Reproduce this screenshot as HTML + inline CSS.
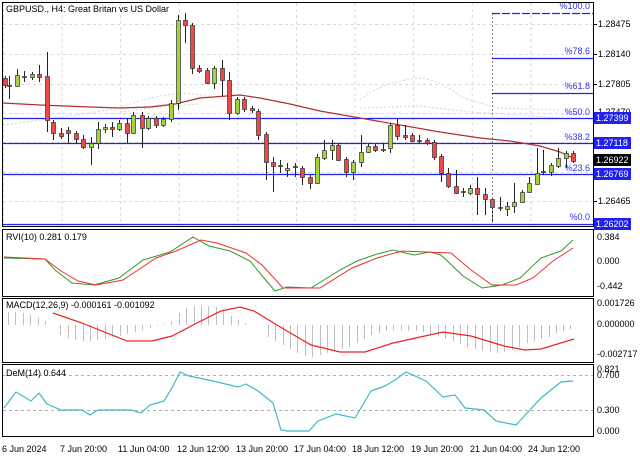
<!DOCTYPE html>
<html><head><meta charset="utf-8"><style>
body{margin:0;background:#fff;width:640px;height:457px;overflow:hidden}
svg{display:block;font-family:"Liberation Sans",sans-serif;font-size:9px}
</style></head><body>
<svg id="s" width="640" height="457" xmlns="http://www.w3.org/2000/svg">
<rect width="640" height="457" fill="#fff"/>
<g id="grid" stroke="#d8d8d8" stroke-dasharray="3,3" stroke-width="1"></g>
<!-- ichimoku faint -->
<g fill="none" stroke="#d4d4d4" stroke-dasharray="2,2">
<path d="M3,125 Q60,118 120,108 Q150,96 175,94 Q200,92 215,100"/>
<path d="M120,112 Q160,106 200,104"/>
<path d="M360,100 Q380,82 420,78 Q440,80 460,96 Q480,104 500,108 L560,110"/>
<path d="M360,108 L420,106 L470,112 L560,118"/>
</g>
<g id="hl"></g>
<polyline id="ma" fill="none" stroke="#b03030" stroke-width="1.2" points="3,103 40,105 90,107 120,108 150,107 175,104 200,98 240,95 260,98 290,104 320,111 360,118 400,125 440,132 480,138 510,141 540,146 560,152 573,158"/>
<g id="candles"></g>
<g id="fib"></g>
<!-- panel borders -->
<g fill="none" stroke="#000" stroke-width="1">
<rect x="2.5" y="2.5" width="591" height="224"/>
<rect x="2.5" y="229.5" width="591" height="67"/>
<rect x="2.5" y="298.5" width="591" height="64"/>
<rect x="2.5" y="364.5" width="591" height="72"/>
</g>
<text x="6" y="12" fill="#000">GBPUSD., H4:  Great Britan vs US Dollar</text>
<g id="axis" fill="#000"></g>
<!-- RVI -->
<polyline fill="none" stroke="#2e9a2e" points="4,258 45,259 55,270 72,283 94,285 119,278 143,260 170,252 193,237 209,246 230,251 250,261 264,278 275,291 287,287 311,288 340,270 357,261 377,254 393,250 414,255 430,252 441,255 463,276 482,288 502,285 520,278 541,258 561,251 573,240"/>
<polyline fill="none" stroke="#f03030" points="4,257 45,259 61,271 78,281 96,285 123,280 156,258 176,251 201,240 217,243 246,253 262,265 283,288 320,288 352,268 377,258 402,251 451,253 471,270 492,285 516,285 533,278 553,261 573,248"/>
<text x="6" y="240">RVI(10) 0.281 0.179</text>
<g id="macd" stroke="#c0c0c0" stroke-width="1"></g>
<polyline fill="none" stroke="#f02020" stroke-width="1.2" points="53,313 82,323 127,341 152,341 172,336 197,323 221,311 240,307 254,311 287,331 311,345 340,352 365,352 393,343 443,332 471,336 504,346 525,350 541,349 574,339"/>
<text x="6" y="308">MACD(12,26,9) -0.000161 -0.001092</text>
<g stroke="#b0b0b0" stroke-dasharray="3,3"><line x1="3" y1="375.5" x2="593" y2="375.5"/><line x1="3" y1="410.5" x2="593" y2="410.5"/></g>
<polyline fill="none" stroke="#40b8c8" stroke-width="1.2" points="4,408 16,392 31,401 39,393 47,404 61,410 82,410 90,415 98,410 131,410 141,413 150,405 164,401 172,388 180,372 189,376 213,381 238,387 246,384 258,391 273,403 281,430 287,431 309,431 318,421 336,414 355,418 371,391 385,386 395,380 406,372 426,381 443,397 455,395 465,408 484,410 496,421 516,425 529,411 541,398 561,382 573,381"/>
<text x="6" y="376">DeM(14) 0.644</text>
<g fill="#000">
<text x="597" y="240">0.384</text><text x="597" y="264">0.000</text><text x="597" y="289">-0.442</text>
<text x="597" y="306">0.001726</text><text x="597" y="327">0.000000</text><text x="597" y="357">-0.002717</text>
<text x="597" y="372">0.821</text><text x="597" y="378">0.700</text><text x="597" y="413">0.300</text><text x="597" y="434">0.000</text>
<text x="2" y="452">6 Jun 2024</text><text x="60" y="452">7 Jun 20:00</text><text x="118" y="452">11 Jun 04:00</text>
<text x="177" y="452">12 Jun 12:00</text><text x="236" y="452">13 Jun 20:00</text><text x="294" y="452">17 Jun 04:00</text>
<text x="352" y="452">18 Jun 12:00</text><text x="411" y="452">19 Jun 20:00</text><text x="470" y="452">21 Jun 04:00</text>
<text x="528" y="452">24 Jun 12:00</text>
</g>
</svg>
<script>
var NS="http://www.w3.org/2000/svg";
function el(p,t,a,txt){var e=document.createElementNS(NS,t);for(var k in a)e.setAttribute(k,a[k]);if(txt)e.textContent=txt;document.getElementById(p).appendChild(e);return e;}
for(var i=0;i<10;i++){var x=3.5+58.6*i;el("grid","line",{x1:x,y1:3,x2:x,y2:226});}
[24,54,84,113,142,172,201].forEach(function(y){el("grid","line",{x1:3,y1:y+.5,x2:593,y2:y+.5});});
[118,143,174,224].forEach(function(y){el("hl","line",{x1:3,y1:y+.5,x2:593,y2:y+.5,stroke:"#2020f0","stroke-width":1.3});});
// candles: x, top, bottom, high, low, up(1)/down(0)
var C=[[5,78,85,76,88,0],[9,85,86,76,99,0],[17,75,86,69,86,1],[24,76,77,71,82,0],[32,74,77,72,80,1],[39,74,77,65,82,0],[47,76,120,52,132,0],[53,122,133,120,140,0],[61,133,136,128,139,0],[68,130,133,127,144,0],[76,133,139,131,143,0],[83,139,147,135,149,0],[91,143,147,137,165,1],[98,129,143,122,149,1],[105,127,129,124,133,1],[112,127,129,122,137,0],[119,123,129,120,131,1],[127,123,133,118,143,0],[133,115,133,112,134,1],[142,115,128,112,148,0],[148,118,128,116,130,1],[156,118,125,116,128,0],[163,119,125,117,127,1],[171,103,119,100,122,1],[178,20,103,15,110,1],[185,20,25,13,43,0],[192,25,68,23,74,0],[199,68,71,65,73,0],[207,70,83,68,84,0],[214,68,83,66,89,1],[222,68,80,60,96,0],[229,80,113,72,120,0],[237,99,113,97,115,1],[244,99,109,97,112,0],[252,108,110,106,113,0],[258,111,135,109,140,0],[266,134,162,132,180,0],[273,162,166,157,192,0],[280,165,166,160,173,0],[287,168,170,163,177,1],[295,166,167,163,177,0],[302,168,177,166,185,0],[310,177,183,175,189,0],[317,157,183,154,184,1],[324,150,158,140,160,1],[332,145,150,140,160,1],[338,145,160,143,161,0],[346,159,172,157,177,0],[353,162,172,160,180,1],[361,152,162,135,167,1],[368,146,152,143,153,1],[375,146,150,144,152,0],[383,149,150,143,152,0],[390,125,148,123,153,1],[397,125,136,118,140,0],[405,135,137,125,140,0],[412,135,141,133,142,0],[419,140,141,135,144,0],[427,140,143,138,145,0],[434,142,157,140,160,0],[441,156,173,154,182,0],[448,173,186,168,188,0],[456,186,193,170,194,0],[463,191,192,188,197,0],[470,188,193,185,195,1],[477,188,194,177,215,0],[485,194,199,188,215,0],[492,199,207,197,223,0],[500,207,208,197,211,0],[507,206,209,202,216,1],[514,202,206,183,213,1],[522,192,202,190,203,1],[529,183,192,177,193,1],[537,173,184,148,184,1],[543,171,172,150,175,0],[551,165,172,163,176,1],[558,158,166,148,168,1],[566,153,158,151,168,1],[573,153,161,151,163,0]];
C.forEach(function(c){el("candles","line",{x1:c[0]+.5,y1:c[3],x2:c[0]+.5,y2:c[4],stroke:"#222"});
var h=Math.max(1,c[2]-c[1]);el("candles","rect",{x:c[0]-1.5,y:c[1]+.5,width:4,height:h,fill:c[5]?"#a4d23a":"#f04848",stroke:"#333","stroke-width":.7});});
// fib
el("fib","line",{x1:492.5,y1:13,x2:492.5,y2:224,stroke:"#888","stroke-dasharray":"2,2"});
[13,58,93].forEach(function(y){el("fib","line",{x1:492,y1:y+.5,x2:593,y2:y+.5,stroke:"#2020f0","stroke-width":1.2,"stroke-dasharray":y==13?"8,2":"none"});});
[["%100.0",9],["%78.6",54],["%61.8",89],["%50.0",115],["%38.2",140],["%23.6",171],["%0.0",220]].forEach(function(f){el("fib","text",{x:590,y:f[1],"text-anchor":"end",fill:"#3030f0"},f[0]);});
// axis
[["1.28475",24],["1.28140",54],["1.27805",84],["1.27470",112],["1.26465",201]].forEach(function(a){el("axis","line",{x1:593,y1:a[1]+.5,x2:597,y2:a[1]+.5,stroke:"#000"});el("axis","text",{x:598,y:a[1]+3},a[0]);});
[["1.27399",118,"#2020f0"],["1.27118",143,"#2020f0"],["1.26922",160,"#000"],["1.26769",174,"#2020f0"],["1.26202",224,"#2020f0"]].forEach(function(a){el("axis","rect",{x:594,y:a[1]-6,width:37,height:12,fill:a[2]});el("axis","text",{x:596,y:a[1]+3,fill:"#fff"},a[0]);});
// macd histogram
var H=[[8,-13],[15,-13],[23,-12],[30,-10],[38,-7],[45,-4],[60,10],[68,13],[75,15],[83,16],[90,16],[97,15],[105,14],[112,12],[120,11],[127,9],[135,7],[142,5],[150,3],[157,1],[164,-1],[171,-4],[179,-12],[186,-17],[194,-19],[201,-19],[208,-19],[216,-18],[223,-14],[231,-9],[238,-5],[245,-2],[268,12],[275,16],[283,20],[290,24],[297,28],[305,31],[312,32],[320,30],[327,28],[334,26],[342,24],[349,22],[357,18],[364,14],[371,10],[379,8],[386,6],[393,5],[401,5],[408,6],[416,6],[423,7],[430,9],[438,11],[445,14],[453,16],[460,19],[467,22],[475,24],[482,26],[490,27],[497,28],[504,27],[512,25],[519,22],[527,18],[534,16],[541,14],[549,12],[556,8],[563,6],[570,4]];
H.forEach(function(h){el("macd","line",{x1:h[0]+.5,y1:325,x2:h[0]+.5,y2:325+h[1]});});
</script>
</body></html>
